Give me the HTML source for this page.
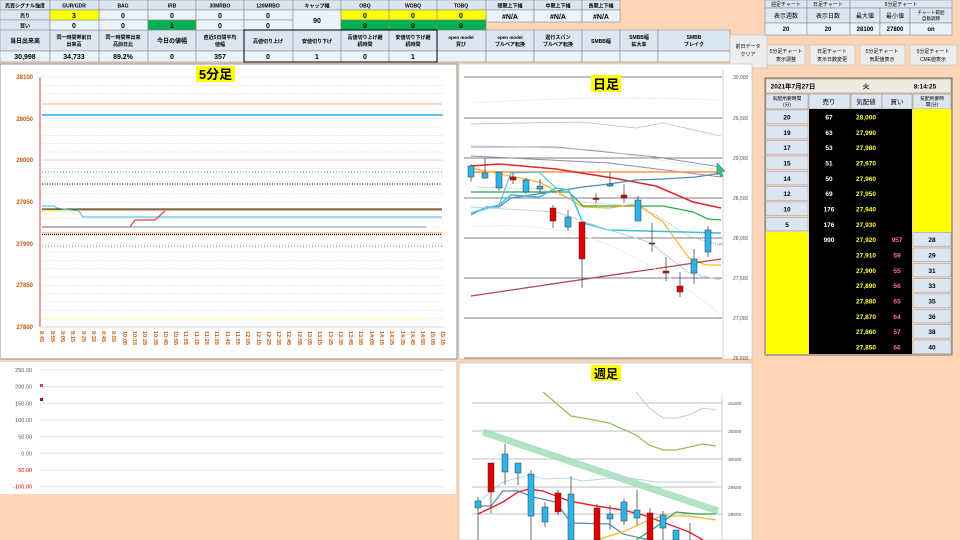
<!DOCTYPE html>
<html><head><meta charset="utf-8"><style>
body{margin:0;width:960px;height:540px;overflow:hidden;background:#FBD5B5;font-family:"Liberation Sans","Noto Sans CJK JP",sans-serif}
svg{display:block}
</style></head><body>
<svg width="960" height="540" viewBox="0 0 960 540" xmlns="http://www.w3.org/2000/svg" font-family="Liberation Sans, Noto Sans CJK JP, sans-serif">
<rect width="960" height="540" fill="#FBD5B5"/>
<!-- header table -->
<g stroke="#8a8a8a" stroke-width="0.6" font-size="5.5" font-weight="bold" text-anchor="middle" fill="#000">
<g fill="#DCE6F1">
<rect x="0" y="0" width="50" height="10"/><rect x="50" y="0" width="49" height="10"/><rect x="99" y="0" width="49" height="10"/><rect x="148" y="0" width="48" height="10"/><rect x="196" y="0" width="48" height="10"/><rect x="244" y="0" width="49" height="10"/><rect x="293" y="0" width="48" height="10"/><rect x="341" y="0" width="48" height="10"/><rect x="389" y="0" width="48" height="10"/><rect x="437" y="0" width="49" height="10"/><rect x="486" y="0" width="48" height="10"/><rect x="534" y="0" width="48" height="10"/><rect x="582" y="0" width="38" height="10"/>
<rect x="0" y="10" width="50" height="10"/><rect x="0" y="20" width="50" height="10"/>
<rect x="0" y="30" width="50" height="21"/><rect x="50" y="30" width="49" height="21"/><rect x="99" y="30" width="49" height="21"/><rect x="148" y="30" width="48" height="21"/><rect x="196" y="30" width="48" height="21"/><rect x="244" y="30" width="49" height="21"/><rect x="293" y="30" width="48" height="21"/><rect x="341" y="30" width="48" height="21"/><rect x="389" y="30" width="48" height="21"/><rect x="437" y="30" width="49" height="21"/><rect x="486" y="30" width="48" height="21"/><rect x="534" y="30" width="48" height="21"/><rect x="582" y="30" width="38" height="21"/><rect x="620" y="30" width="38" height="21"/><rect x="658" y="30" width="72" height="21"/>
</g>
<g fill="#EAF3F8">
<rect x="99" y="10" width="49" height="10"/><rect x="148" y="10" width="48" height="10"/><rect x="196" y="10" width="48" height="10"/><rect x="244" y="10" width="49" height="10"/>
<rect x="50" y="20" width="49" height="10"/><rect x="99" y="20" width="49" height="10"/><rect x="196" y="20" width="48" height="10"/><rect x="244" y="20" width="49" height="10"/>
<rect x="293" y="10" width="48" height="20"/>
<rect x="486" y="10" width="48" height="12"/><rect x="534" y="10" width="48" height="12"/><rect x="582" y="10" width="38" height="12"/>
<rect x="0" y="51" width="50" height="11"/><rect x="50" y="51" width="49" height="11"/><rect x="99" y="51" width="49" height="11"/><rect x="148" y="51" width="48" height="11"/><rect x="196" y="51" width="48" height="11"/><rect x="244" y="51" width="49" height="11"/><rect x="293" y="51" width="48" height="11"/><rect x="341" y="51" width="48" height="11"/><rect x="389" y="51" width="48" height="11"/><rect x="437" y="51" width="49" height="11"/><rect x="486" y="51" width="48" height="11"/><rect x="534" y="51" width="48" height="11"/><rect x="582" y="51" width="38" height="11"/><rect x="620" y="51" width="38" height="11"/><rect x="658" y="51" width="72" height="11"/>
</g>
<g fill="#FFFF00"><rect x="50" y="10" width="49" height="10"/><rect x="341" y="10" width="48" height="10"/><rect x="389" y="10" width="48" height="10"/><rect x="437" y="10" width="49" height="10"/></g>
<g fill="#00B050"><rect x="148" y="20" width="48" height="10"/><rect x="341" y="20" width="48" height="10"/><rect x="389" y="20" width="48" height="10"/><rect x="437" y="20" width="49" height="10"/></g>
<g stroke="none">
<text x="25" y="7.5" font-size="5">売買シグナル強度</text><text x="74" y="7.5" font-size="5">GUR/GDR</text><text x="123" y="7.5" font-size="5">BAG</text><text x="172" y="7.5" font-size="5">IRB</text><text x="220" y="7.5" font-size="5">30MRBO</text><text x="268" y="7.5" font-size="5">120MRBO</text><text x="317" y="7.5" font-size="5">キャップ幅</text><text x="365" y="7.5" font-size="5">OBQ</text><text x="413" y="7.5" font-size="5">WOBQ</text><text x="461" y="7.5" font-size="5">TOBQ</text><text x="510" y="7.5" font-size="5">短期上下幅</text><text x="558" y="7.5" font-size="5">中期上下幅</text><text x="601" y="7.5" font-size="5">長期上下幅</text>
<text x="25" y="17.5" font-size="5">売り</text><text x="25" y="27.5" font-size="5">買い</text>
<g font-size="7"><text x="74" y="18">3</text><text x="123" y="18">0</text><text x="172" y="18">0</text><text x="220" y="18">0</text><text x="268" y="18">0</text><text x="317" y="23">90</text><text x="365" y="18">0</text><text x="413" y="18">0</text><text x="461" y="18">0</text>
<text x="74" y="28">0</text><text x="123" y="28">0</text><text x="172" y="28">1</text><text x="220" y="28">0</text><text x="268" y="28">0</text><text x="365" y="28">0</text><text x="413" y="28">0</text><text x="461" y="28">0</text>
<text x="510" y="19">#N/A</text><text x="558" y="19">#N/A</text><text x="601" y="19">#N/A</text></g>
<text x="25" y="43" font-size="6">当日出来高</text>
<text x="74" y="39" font-size="5">同一時間帯前日</text><text x="74" y="46" font-size="5">出来高</text>
<text x="123" y="39" font-size="5">同一時間帯出来</text><text x="123" y="46" font-size="5">高前日比</text>
<text x="172" y="43" font-size="6">今日の値幅</text>
<text x="220" y="39" font-size="5">直近5日間平均</text><text x="220" y="46" font-size="5">値幅</text>
<text x="268" y="43" font-size="5">高値切り上げ</text><text x="317" y="43" font-size="5">安値切り下げ</text>
<text x="365" y="39" font-size="5">高値切り上げ継</text><text x="365" y="46" font-size="5">続時間</text>
<text x="413" y="39" font-size="5">安値切り下げ継</text><text x="413" y="46" font-size="5">続時間</text>
<text x="461" y="39" font-size="4.5">open model</text><text x="461" y="46" font-size="5">買び</text>
<text x="510" y="39" font-size="4.5">open model</text><text x="510" y="46" font-size="5">ブルベア転換</text>
<text x="558" y="39" font-size="5">遅行スパン</text><text x="558" y="46" font-size="5">ブルベア転換</text>
<text x="601" y="43" font-size="5">SMBB幅</text>
<text x="639" y="39" font-size="5">SMBB幅</text><text x="639" y="46" font-size="5">拡大率</text>
<text x="694" y="39" font-size="5">SMBB</text><text x="694" y="46" font-size="5">ブレイク</text>
<g font-size="7"><text x="25" y="59">30,998</text><text x="74" y="59">34,733</text><text x="123" y="59">89.2%</text><text x="172" y="59">0</text><text x="220" y="59">357</text><text x="268" y="59">0</text><text x="317" y="59">1</text><text x="365" y="59">0</text><text x="413" y="59">1</text></g>
</g>
</g>
<rect x="244" y="30" width="193" height="32" fill="none" stroke="#000" stroke-width="1"/>
<!-- buttons -->
<g font-size="5" text-anchor="middle" fill="#000">
<rect x="730" y="35" width="37" height="33" fill="#EDEDED" stroke="#bbb" stroke-width="0.5"/><text x="748" y="48">前日データ</text><text x="748" y="56">クリア</text>
<rect x="767" y="45" width="38" height="20" fill="#EDEDED" stroke="#bbb" stroke-width="0.5"/><text x="786" y="53">5分足チャート</text><text x="786" y="61">表示調整</text>
<rect x="810" y="45" width="45" height="20" fill="#EDEDED" stroke="#bbb" stroke-width="0.5"/><text x="832" y="53">日足チャート</text><text x="832" y="61">表示日数変更</text>
<rect x="860" y="45" width="45" height="20" fill="#EDEDED" stroke="#bbb" stroke-width="0.5"/><text x="882" y="53">5分足チャート</text><text x="882" y="61">気配値表示</text>
<rect x="910" y="45" width="47" height="20" fill="#EDEDED" stroke="#bbb" stroke-width="0.5"/><text x="933" y="53">5分足チャート</text><text x="933" y="61">CME値表示</text>
</g>
<!-- top right table -->
<g stroke="#8a8a8a" stroke-width="0.6" font-size="5" text-anchor="middle">
<rect x="765" y="0" width="42" height="8" fill="#DCE6F1"/><rect x="807" y="0" width="43" height="8" fill="#DCE6F1"/><rect x="850" y="0" width="102" height="8" fill="#DCE6F1"/>
<rect x="765" y="8" width="42" height="15" fill="#DCE6F1"/><rect x="807" y="8" width="43" height="15" fill="#DCE6F1"/><rect x="850" y="8" width="30" height="15" fill="#DCE6F1"/><rect x="880" y="8" width="30" height="15" fill="#DCE6F1"/><rect x="910" y="8" width="42" height="15" fill="#DCE6F1"/>
<rect x="765" y="23" width="42" height="12" fill="#EAF3F8"/><rect x="807" y="23" width="43" height="12" fill="#EAF3F8"/><rect x="850" y="23" width="30" height="12" fill="#EAF3F8"/><rect x="880" y="23" width="30" height="12" fill="#EAF3F8"/><rect x="910" y="23" width="42" height="12" fill="#EAF3F8"/>
<g stroke="none" fill="#000"><text x="786" y="6">週足チャート</text><text x="828" y="6">日足チャート</text><text x="901" y="6">5分足チャート</text>
<text x="786" y="18" font-size="6">表示週数</text><text x="828" y="18" font-size="6">表示日数</text><text x="865" y="18" font-size="6">最大値</text><text x="895" y="18" font-size="6">最小値</text><text x="931" y="14" font-size="4.5">チャート範囲</text><text x="931" y="20" font-size="4.5">自動調節</text>
<g font-weight="bold" font-size="6"><text x="786" y="31">20</text><text x="828" y="31">20</text><text x="865" y="31">28100</text><text x="895" y="31">27800</text><text x="931" y="31">on</text></g></g>
</g>
<!-- order book -->
<g font-weight="bold" text-anchor="middle">
<rect x="765" y="78" width="187" height="277" fill="#FBD5B5" stroke="#555" stroke-width="0.8"/>
<rect x="766" y="79" width="185" height="14" fill="#EEECE1" stroke="#888" stroke-width="0.5"/>
<text x="793" y="88.5" font-size="6.5">2021年7月27日</text><text x="866" y="88.5" font-size="6.5">火</text><text x="925" y="88.5" font-size="6.5">8:14:25</text>
<g fill="#DCE6F1" stroke="#888" stroke-width="0.5"><rect x="766" y="94" width="42" height="15"/><rect x="809" y="94" width="41" height="15"/><rect x="851" y="94" width="31" height="15"/><rect x="882" y="94" width="30" height="15"/><rect x="913" y="94" width="38" height="15"/></g>
<g font-size="4.8" font-weight="normal"><text x="787" y="100">気配所要時間</text><text x="787" y="106">(分)</text><text x="932" y="100">気配所要時</text><text x="932" y="106">間(分)</text></g>
<g font-size="6.5" font-weight="normal"><text x="829" y="104">売り</text><text x="866" y="104">気配値</text><text x="897" y="104">買い</text></g>
<rect x="809" y="109" width="103" height="245" fill="#000"/>
<rect x="913" y="109" width="38" height="123" fill="#FFFF00"/>
<rect x="766" y="232" width="42" height="122" fill="#FFFF00"/>
<g fill="#DCE6F1" stroke="#999" stroke-width="0.5">
<rect x="766" y="110" width="42" height="13.5"/><rect x="766" y="125.4" width="42" height="13.5"/><rect x="766" y="140.7" width="42" height="13.5"/><rect x="766" y="156" width="42" height="13.5"/><rect x="766" y="171.4" width="42" height="13.5"/><rect x="766" y="186.7" width="42" height="13.5"/><rect x="766" y="202" width="42" height="13.5"/><rect x="766" y="217.4" width="42" height="13.5"/>
<rect x="913" y="232.7" width="38" height="13.5"/><rect x="913" y="248" width="38" height="13.5"/><rect x="913" y="263.4" width="38" height="13.5"/><rect x="913" y="278.7" width="38" height="13.5"/><rect x="913" y="294" width="38" height="13.5"/><rect x="913" y="309.4" width="38" height="13.5"/><rect x="913" y="324.7" width="38" height="13.5"/><rect x="913" y="340" width="38" height="13.5"/>
</g>
<g font-size="6.5">
<text x="787" y="119.5">20</text><text x="787" y="134.8">19</text><text x="787" y="150.2">17</text><text x="787" y="165.5">15</text><text x="787" y="180.8">14</text><text x="787" y="196.2">12</text><text x="787" y="211.5">10</text><text x="787" y="226.8">5</text>
<text x="932" y="242">28</text><text x="932" y="257.5">29</text><text x="932" y="272.8">31</text><text x="932" y="288.2">33</text><text x="932" y="303.5">35</text><text x="932" y="318.8">36</text><text x="932" y="334.2">38</text><text x="932" y="349.5">40</text>
<g fill="#fff"><text x="829" y="119.5">67</text><text x="829" y="134.8">63</text><text x="829" y="150.2">53</text><text x="829" y="165.5">51</text><text x="829" y="180.8">50</text><text x="829" y="196.2">69</text><text x="829" y="211.5">176</text><text x="829" y="226.8">176</text><text x="829" y="242">990</text></g>
<g fill="#FFFF33"><text x="866" y="119.5">28,000</text><text x="866" y="134.8">27,990</text><text x="866" y="150.2">27,980</text><text x="866" y="165.5">27,970</text><text x="866" y="180.8">27,960</text><text x="866" y="196.2">27,950</text><text x="866" y="211.5">27,940</text><text x="866" y="226.8">27,930</text><text x="866" y="242">27,920</text><text x="866" y="257.5">27,910</text><text x="866" y="272.8">27,900</text><text x="866" y="288.2">27,890</text><text x="866" y="303.5">27,880</text><text x="866" y="318.8">27,870</text><text x="866" y="334.2">27,860</text><text x="866" y="349.5">27,850</text></g>
<g fill="#FF66CC"><text x="897" y="242">957</text><text x="897" y="257.5">59</text><text x="897" y="272.8">55</text><text x="897" y="288.2">56</text><text x="897" y="303.5">65</text><text x="897" y="318.8">64</text><text x="897" y="334.2">57</text><text x="897" y="349.5">66</text></g>
</g>
</g>
<!-- 5-min chart -->
<rect x="0" y="64" width="457" height="295" fill="#fff" stroke="#8a8fa8" stroke-width="1"/>
<g stroke="#d9d9d9" stroke-width="0.6" stroke-dasharray="2,1">
<path d="M42 77H443M42 85.3H443M42 93.6H443M42 102H443M42 110.3H443M42 118.7H443M42 127H443M42 135.3H443M42 143.6H443M42 152H443M42 160.3H443M42 168.7H443M42 177H443M42 185.3H443M42 193.6H443M42 202H443M42 210.3H443M42 218.7H443M42 227H443M42 235.3H443M42 243.6H443M42 252H443M42 260.3H443M42 268.7H443M42 277H443M42 285.3H443M42 293.6H443M42 302H443M42 310.3H443M42 318.7H443"/>
</g>
<path d="M40 77V327" stroke="#E04050" stroke-width="1"/>
<path d="M40 327H444" stroke="#aaa" stroke-width="0.6"/>
<g stroke-width="1" fill="none">
<path d="M42 104H442" stroke="#F4B183"/>
<path d="M42 115H443" stroke="#5BC4E8" stroke-width="2"/>
<path d="M42 160H442" stroke="#F8CBE0"/>
<path d="M42 172H442" stroke="#2FA060" stroke-dasharray="1,2"/>
<path d="M42 184H442" stroke="#000" stroke-dasharray="1,1.5"/>
<path d="M42 210H442" stroke="#F79646" stroke-width="1.5"/>
<path d="M42 209H442" stroke="#1F2D3D" stroke-width="1"/>
<path d="M42 211H80" stroke="#FFFF80" stroke-width="1.5"/>
<path d="M42 206H54L57 208L79 211L83 217H442" stroke="#3CB4E5" stroke-width="1"/>
<path d="M42 227H130L135 220H155L165 211" stroke="#E04050" stroke-width="1.2"/>
<path d="M42 227H426" stroke="#7F8FA6" stroke-width="1"/>
<path d="M42 233H442" stroke="#F8B88B" stroke-width="1.5"/>
<path d="M42 234.5H442" stroke="#000" stroke-dasharray="1,1"/>
<path d="M42 246H442" stroke="#2FA060" stroke-dasharray="1,2"/>
<path d="M42 319H426" stroke="#FFFF99" stroke-width="1"/>
</g>
<rect x="196" y="66" width="39" height="16" fill="#FFFF00"/>
<text x="215.5" y="79" font-size="13" font-weight="bold" text-anchor="middle">5分足</text>
<g font-size="6" fill="#C55A11" text-anchor="end" font-weight="bold">
<text x="33" y="79">28100</text><text x="33" y="121">28050</text><text x="33" y="162">28000</text><text x="33" y="204">27950</text><text x="33" y="246">27900</text><text x="33" y="287">27850</text><text x="33" y="329">27800</text>
</g>
<g font-size="5.5" fill="#C55A11" font-weight="bold" id="xl">
<text transform="translate(40,331) rotate(90)">8:45</text><text transform="translate(51,331) rotate(90)">8:55</text><text transform="translate(61,331) rotate(90)">9:05</text><text transform="translate(71,331) rotate(90)">9:15</text><text transform="translate(82,331) rotate(90)">9:25</text><text transform="translate(92,331) rotate(90)">9:35</text><text transform="translate(102,331) rotate(90)">9:45</text><text transform="translate(112,331) rotate(90)">9:55</text><text transform="translate(123,331) rotate(90)">10:05</text><text transform="translate(133,331) rotate(90)">10:15</text><text transform="translate(143,331) rotate(90)">10:25</text><text transform="translate(154,331) rotate(90)">10:35</text><text transform="translate(164,331) rotate(90)">10:45</text><text transform="translate(174,331) rotate(90)">10:55</text><text transform="translate(184,331) rotate(90)">11:05</text><text transform="translate(195,331) rotate(90)">11:15</text><text transform="translate(205,331) rotate(90)">11:25</text><text transform="translate(215,331) rotate(90)">11:35</text><text transform="translate(226,331) rotate(90)">11:45</text><text transform="translate(236,331) rotate(90)">11:55</text><text transform="translate(246,331) rotate(90)">12:05</text><text transform="translate(257,331) rotate(90)">12:15</text><text transform="translate(267,331) rotate(90)">12:25</text><text transform="translate(277,331) rotate(90)">12:35</text><text transform="translate(287,331) rotate(90)">12:45</text><text transform="translate(298,331) rotate(90)">12:55</text><text transform="translate(308,331) rotate(90)">13:05</text><text transform="translate(318,331) rotate(90)">13:15</text><text transform="translate(329,331) rotate(90)">13:25</text><text transform="translate(339,331) rotate(90)">13:35</text><text transform="translate(349,331) rotate(90)">13:45</text><text transform="translate(359,331) rotate(90)">13:55</text><text transform="translate(370,331) rotate(90)">14:05</text><text transform="translate(380,331) rotate(90)">14:15</text><text transform="translate(390,331) rotate(90)">14:25</text><text transform="translate(401,331) rotate(90)">14:35</text><text transform="translate(411,331) rotate(90)">14:45</text><text transform="translate(421,331) rotate(90)">14:55</text><text transform="translate(431,331) rotate(90)">15:05</text><text transform="translate(441,331) rotate(90)">15:15</text>
</g>
<!-- lower left -->
<rect x="0" y="362" width="456" height="132" fill="#fff"/>
<g stroke="#e3e3e3" stroke-width="1"><path d="M40 370H443M40 386.7H443M40 403.3H443M40 420H443M40 436.7H443M40 453.3H443M40 470H443M40 486.7H443"/></g>
<g font-size="5.5" fill="#555" text-anchor="end"><text x="32" y="372">250.00</text><text x="32" y="388.7">200.00</text><text x="32" y="405.3">150.00</text><text x="32" y="422">100.00</text><text x="32" y="438.7">50.00</text><text x="32" y="455.3">0.00</text><text x="32" y="472" fill="#E00000">-50.00</text><text x="32" y="488.7" fill="#E00000">-100.00</text></g>
<rect x="40" y="384" width="3" height="3" fill="#C0504D"/><rect x="40" y="398" width="3" height="3" fill="#C00000"/>
<!-- daily chart -->
<rect x="459" y="64" width="293" height="295" fill="#fff" stroke="#bbb" stroke-width="0.6"/>
<g stroke="#555" stroke-width="0.8"><path d="M464 77H722M464 118H722M464 158H722M464 198H722M464 238H722M464 278H722M464 318H722M464 358H722"/></g>
<path d="M723 70V358" stroke="#aaa" stroke-width="0.5"/>
<g font-size="5" fill="#555"><text x="733" y="79">30,000</text><text x="733" y="120">29,500</text><text x="733" y="160">29,000</text><text x="733" y="200">28,500</text><text x="733" y="240">28,000</text><text x="733" y="280">27,500</text><text x="733" y="320">27,000</text><text x="733" y="360">26,500</text></g>
<g fill="none" stroke-width="1.2">
<path d="M471 103Q600 95 721 100" stroke="#eee"/>
<path d="M471 124L580 122L636 128L663 123L721 136" stroke="#E6A8B8" stroke-width="0.8"/>
<path d="M471 147L556 147L656 157L721 167" stroke="#8797BA" stroke-width="1"/>
<path d="M471 145L600 150L721 170" stroke="#D9CFA0" stroke-dasharray="1,1" stroke-width="0.8"/>
<path d="M471 156L609 163L721 177" stroke="#9A86B0" stroke-width="1"/>
<path d="M471 172H721" stroke="#F79646" stroke-width="1.5"/>
<path d="M471 166L499 164L556 169L613 178L656 186L693 202L721 208" stroke="#E8212E" stroke-width="1.5"/>
<path d="M471 215L486 207L499 207L511 198L583 187L609 184L636 180L663 179L696 177L721 173" stroke="#4A90B0"/>
<path d="M471 192L569 192L583 206L663 206L693 212L708 219L721 220" stroke="#2DA550"/>
<path d="M471 168L539 182L556 191L583 207L609 208L636 204L663 222L689 258L706 265L721 265" stroke="#F5B625"/>
<path d="M471 213L499 205L511 195L539 197L556 188L569 190L583 223L609 230L721 233" stroke="#3EBFEA" stroke-width="1.5"/>
<path d="M499 205L511 173L539 172L556 188" stroke="#3EBFEA" stroke-width="1"/>
<path d="M471 207L556 212L609 230L649 242L689 273L721 280" stroke="#B5D5E0" stroke-width="1"/>
<path d="M476 187L540 189L583 202L643 207L690 237L721 245" stroke="#999" stroke-dasharray="1,1.2" stroke-width="0.8"/>
<path d="M471 296L721 259" stroke="#B04848" stroke-width="1.3"/>
<path d="M471 227Q560 220 620 250T721 315" stroke="#eee" stroke-width="0.8"/>
</g>
<g stroke="#333" stroke-width="0.7">
<path d="M471 164V182M485 158V179M499 172V191M513 173V184M526 178V194M540 179V193M553 205V228M568 210V231M582 222V288M596 193V203M610 172V187M624 184V203M638 196V221M652 223V252M666 257V281M680 272V297M694 249V284M708 226V257"/>
</g>
<g stroke="#333" stroke-width="0.5">
<rect x="468" y="166" width="6" height="11" fill="#2FB4E8"/><rect x="482" y="173" width="6" height="5" fill="#2FB4E8"/><rect x="496" y="172" width="6" height="16" fill="#2FB4E8"/><rect x="510" y="177" width="6" height="3" fill="#E00000"/><rect x="523" y="180" width="6" height="12" fill="#2FB4E8"/><rect x="537" y="186" width="6" height="3" fill="#2FB4E8"/><rect x="550" y="208" width="6" height="13" fill="#E00000"/><rect x="565" y="217" width="6" height="10" fill="#2FB4E8"/><rect x="579" y="222" width="6" height="37" fill="#E00000"/><rect x="593" y="198" width="6" height="1.5" fill="#E00000"/><rect x="607" y="184" width="6" height="2" fill="#2FB4E8"/><rect x="621" y="195" width="6" height="3" fill="#E00000"/><rect x="635" y="200" width="6" height="21" fill="#2FB4E8"/><rect x="649" y="243" width="6" height="1" fill="#333"/><rect x="663" y="271" width="6" height="2" fill="#E00000"/><rect x="677" y="286" width="6" height="6" fill="#E00000"/><rect x="691" y="259" width="6" height="14" fill="#2FB4E8"/><rect x="705" y="230" width="6" height="22" fill="#2FB4E8"/>
<path d="M719 244H723"/>
</g>
<path d="M717 163L725 171L721 172L723 176L721 177L719 173L717 175Z" fill="#2EC49A" stroke="#333" stroke-width="0.4"/>
<rect x="591" y="75" width="30" height="17" fill="#FFFF00"/>
<text x="606" y="89" font-size="13" font-weight="bold" text-anchor="middle">日足</text>
<!-- weekly chart -->
<rect x="459" y="363" width="293" height="177" fill="#fff" stroke="#bbb" stroke-width="0.6"/>
<g stroke="#aaa" stroke-width="0.8"><path d="M472 403H722M472 431H722M472 459H722M472 487H722M472 514H722"/></g>
<path d="M722 393V540" stroke="#aaa" stroke-width="0.5"/>
<g font-size="4.8" fill="#555"><text x="728" y="405">31000</text><text x="728" y="433">30500</text><text x="728" y="461">30000</text><text x="728" y="489">29500</text><text x="728" y="516">29000</text></g>
<path d="M483 432L718 511" stroke="#9FDCB8" stroke-width="7" opacity="0.8"/>
<g fill="none" stroke-width="1.2">
<path d="M543 392L571 416L589 419L609 423L636 435L649 445L663 450L676 450L703 444L716 446" stroke="#8CC152"/>
<path d="M636 392L649 408L663 418L676 418L689 415L703 408L716 410" stroke="#E6A8B8" stroke-width="0.8"/>
<path d="M478 502L503 482L529 475L543 479L569 478L583 481L623 477L656 482L716 482" stroke="#B5D5E8" stroke-width="1"/>
<path d="M478 506L491 506L503 491L518 491L533 497L556 502L571 523L609 524L623 534L649 540" stroke="#4A90B0"/>
<path d="M478 514L503 502L518 492L529 489L543 491L569 501L596 506L623 510L643 515L676 527L689 532L703 540" stroke="#E8212E" stroke-width="1.4"/>
<path d="M596 540L623 532L649 520L663 516L689 516L716 520" stroke="#F5B625"/>
<path d="M636 540L656 527L676 512L696 514L716 514" stroke="#2DA550"/>
</g>
<g stroke="#333" stroke-width="0.7"><path d="M478 497V540M491 463V513M505 444V485M518 463V485M531 470V540M545 502V527M558 490V515M571 476V540M597 504V540M610 505V530M624 499V525M637 490V525M650 508V540M663 511V540M690 523V540"/></g>
<g stroke="#333" stroke-width="0.5">
<rect x="475" y="501" width="6" height="7" fill="#2FB4E8"/><rect x="488" y="463" width="6" height="29" fill="#E00000"/><rect x="502" y="454" width="6" height="18" fill="#2FB4E8"/><rect x="515" y="463" width="6" height="10" fill="#2FB4E8"/><rect x="528" y="474" width="6" height="42" fill="#2FB4E8"/><rect x="542" y="507" width="6" height="15" fill="#2FB4E8"/><rect x="555" y="493" width="6" height="19" fill="#E00000"/><rect x="568" y="494" width="6" height="46" fill="#2FB4E8"/><rect x="594" y="508" width="6" height="32" fill="#E00000"/><rect x="607" y="514" width="6" height="5" fill="#2FB4E8"/><rect x="621" y="502" width="6" height="19" fill="#2FB4E8"/><rect x="634" y="510" width="6" height="8" fill="#2FB4E8"/><rect x="647" y="513" width="6" height="27" fill="#E00000"/><rect x="660" y="515" width="6" height="13" fill="#2FB4E8"/><rect x="673" y="530" width="6" height="10" fill="#2FB4E8"/>
</g>
<rect x="591" y="365" width="30" height="16" fill="#FFFF00"/>
<text x="606" y="378" font-size="12" font-weight="bold" text-anchor="middle">週足</text>
</svg>
</body></html>
